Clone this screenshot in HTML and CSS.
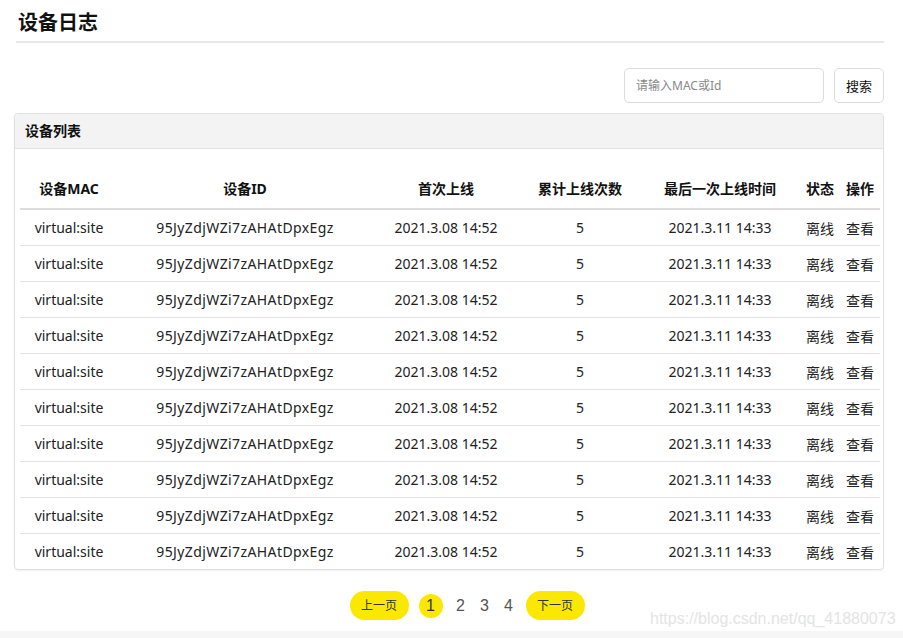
FILE: index.html
```html
<!DOCTYPE html>
<html lang="zh-CN">
<head>
<meta charset="utf-8">
<title>设备日志</title>
<link rel="stylesheet" href="styles.css">
</head>
<body>
<div class="page">
  <h1 class="title">设备日志</h1>
  <div class="toolbar">
    <input class="search-input" type="text" placeholder="请输入MAC或Id">
    <button class="search-btn">搜索</button>
  </div>
  <div class="panel">
    <div class="panel-head">设备列表</div>
    <div class="panel-body">
      <table class="grid">
        <thead>
          <tr>
            <th class="c1">设备MAC</th>
            <th class="c2">设备ID</th>
            <th class="c3">首次上线</th>
            <th class="c4">累计上线次数</th>
            <th class="c5">最后一次上线时间</th>
            <th class="c6">状态</th>
            <th class="c7">操作</th>
          </tr>
        </thead>
        <tbody>
          <tr><td>virtual:site</td><td class="id">95JyZdjWZi7zAHAtDpxEgz</td><td>2021.3.08 14:52</td><td>5</td><td>2021.3.11 14:33</td><td>离线</td><td>查看</td></tr>
          <tr><td>virtual:site</td><td class="id">95JyZdjWZi7zAHAtDpxEgz</td><td>2021.3.08 14:52</td><td>5</td><td>2021.3.11 14:33</td><td>离线</td><td>查看</td></tr>
          <tr><td>virtual:site</td><td class="id">95JyZdjWZi7zAHAtDpxEgz</td><td>2021.3.08 14:52</td><td>5</td><td>2021.3.11 14:33</td><td>离线</td><td>查看</td></tr>
          <tr><td>virtual:site</td><td class="id">95JyZdjWZi7zAHAtDpxEgz</td><td>2021.3.08 14:52</td><td>5</td><td>2021.3.11 14:33</td><td>离线</td><td>查看</td></tr>
          <tr><td>virtual:site</td><td class="id">95JyZdjWZi7zAHAtDpxEgz</td><td>2021.3.08 14:52</td><td>5</td><td>2021.3.11 14:33</td><td>离线</td><td>查看</td></tr>
          <tr><td>virtual:site</td><td class="id">95JyZdjWZi7zAHAtDpxEgz</td><td>2021.3.08 14:52</td><td>5</td><td>2021.3.11 14:33</td><td>离线</td><td>查看</td></tr>
          <tr><td>virtual:site</td><td class="id">95JyZdjWZi7zAHAtDpxEgz</td><td>2021.3.08 14:52</td><td>5</td><td>2021.3.11 14:33</td><td>离线</td><td>查看</td></tr>
          <tr><td>virtual:site</td><td class="id">95JyZdjWZi7zAHAtDpxEgz</td><td>2021.3.08 14:52</td><td>5</td><td>2021.3.11 14:33</td><td>离线</td><td>查看</td></tr>
          <tr><td>virtual:site</td><td class="id">95JyZdjWZi7zAHAtDpxEgz</td><td>2021.3.08 14:52</td><td>5</td><td>2021.3.11 14:33</td><td>离线</td><td>查看</td></tr>
          <tr><td>virtual:site</td><td class="id">95JyZdjWZi7zAHAtDpxEgz</td><td>2021.3.08 14:52</td><td>5</td><td>2021.3.11 14:33</td><td>离线</td><td>查看</td></tr>
        </tbody>
      </table>
    </div>
  </div>
  <div class="pager">
    <span class="pill">上一页</span>
    <span class="num active">1</span>
    <span class="num">2</span>
    <span class="num">3</span>
    <span class="num">4</span>
    <span class="pill">下一页</span>
  </div>
</div>
<div class="footer-band"></div>
<div class="watermark">https://blog.csdn.net/qq_41880073</div>
</body>
</html>
```

FILE: styles.css
```css
html, body {
  margin: 0;
  padding: 0;
  background: #fff;
}
body {
  font-family: "Noto Sans", "Noto Sans CJK SC", sans-serif;
  color: #222;
  width: 903px;
  height: 638px;
  overflow: hidden;
  position: relative;
}
.page {
  padding: 0 19px 0 14px;
}
.title {
  margin: 0 0 0 2px;
  padding: 10px 0 5px 2px;
  font-size: 20px;
  line-height: 26px;
  font-weight: bold;
  color: #111;
  border-bottom: 2px solid #e8e8e8;
}
.toolbar {
  display: flex;
  justify-content: flex-end;
  gap: 10px;
  margin-top: 25px;
  margin-bottom: 10px;
}
.search-input {
  box-sizing: border-box;
  width: 200px;
  height: 35px;
  border: 1px solid #dcdcdc;
  border-radius: 5px;
  padding: 0 11px;
  font-family: "Noto Sans", "Noto Sans CJK SC", sans-serif;
  font-size: 12px;
  color: #333;
  outline: none;
}
.search-input::placeholder {
  color: #888;
}
.search-btn {
  box-sizing: border-box;
  width: 50px;
  height: 35px;
  border: 1px solid #dcdcdc;
  border-radius: 5px;
  background: #fff;
  font-family: "Noto Sans", "Noto Sans CJK SC", sans-serif;
  font-size: 13px;
  color: #111;
  padding: 0;
}
.panel {
  border: 1px solid #e0e0e0;
  border-radius: 4px;
  box-shadow: 0 1px 2px rgba(0,0,0,0.06);
  overflow: hidden;
}
.panel-head {
  height: 34px;
  line-height: 34px;
  background: #f3f3f3;
  border-bottom: 1px solid #e3e3e3;
  padding-left: 10px;
  font-size: 14px;
  font-weight: bold;
  color: #111;
}
.panel-body {
  padding: 19px 2px 0 5px;
}
.grid {
  width: 860px;
  border-collapse: collapse;
  table-layout: fixed;
  font-size: 14px;
}
.grid th {
  height: 40px;
  font-size: 14px;
  font-weight: bold;
  color: #111;
  text-align: center;
  padding: 0;
  border-bottom: 2px solid #dddddd;
}
.grid td {
  height: 35px;
  text-align: center;
  padding: 0;
  color: #222;
  border-bottom: 1px solid #e3e3e3;
  white-space: nowrap;
}
.grid td.id {
  letter-spacing: 0.4px;
}
.grid tbody tr:last-child td {
  border-bottom: none;
}
.c1 { width: 98px; }
.c2 { width: 254px; }
.c3 { width: 148px; }
.c4 { width: 120px; }
.c5 { width: 160px; }
.c6 { width: 40px; }
.c7 { width: 40px; }
.pager {
  display: flex;
  justify-content: center;
  align-items: center;
  margin-top: 21px;
  padding-left: 36px;
}
.pill {
  display: inline-block;
  width: 59px;
  height: 29px;
  line-height: 29px;
  border-radius: 15px;
  background: #fbe800;
  color: #333;
  font-size: 12px;
  text-align: center;
}
.num {
  display: inline-block;
  width: 24px;
  height: 24px;
  line-height: 24px;
  text-align: center;
  font-size: 16px;
  color: #555;
  font-family: "Liberation Sans", "Noto Sans", sans-serif;
}
.num.active {
  background: #fbe800;
  border-radius: 50%;
  color: #333;
  margin: 0 6px 0 10px;
}
.pill:last-child {
  margin-left: 5px;
}
.footer-band {
  position: absolute;
  left: 0;
  right: 0;
  top: 631px;
  height: 7px;
  background: #f6f6f6;
}
.watermark {
  position: absolute;
  left: 650px;
  top: 610px;
  font-family: "Liberation Sans", sans-serif;
  font-size: 16px;
  color: #e4e4e4;
}
```
